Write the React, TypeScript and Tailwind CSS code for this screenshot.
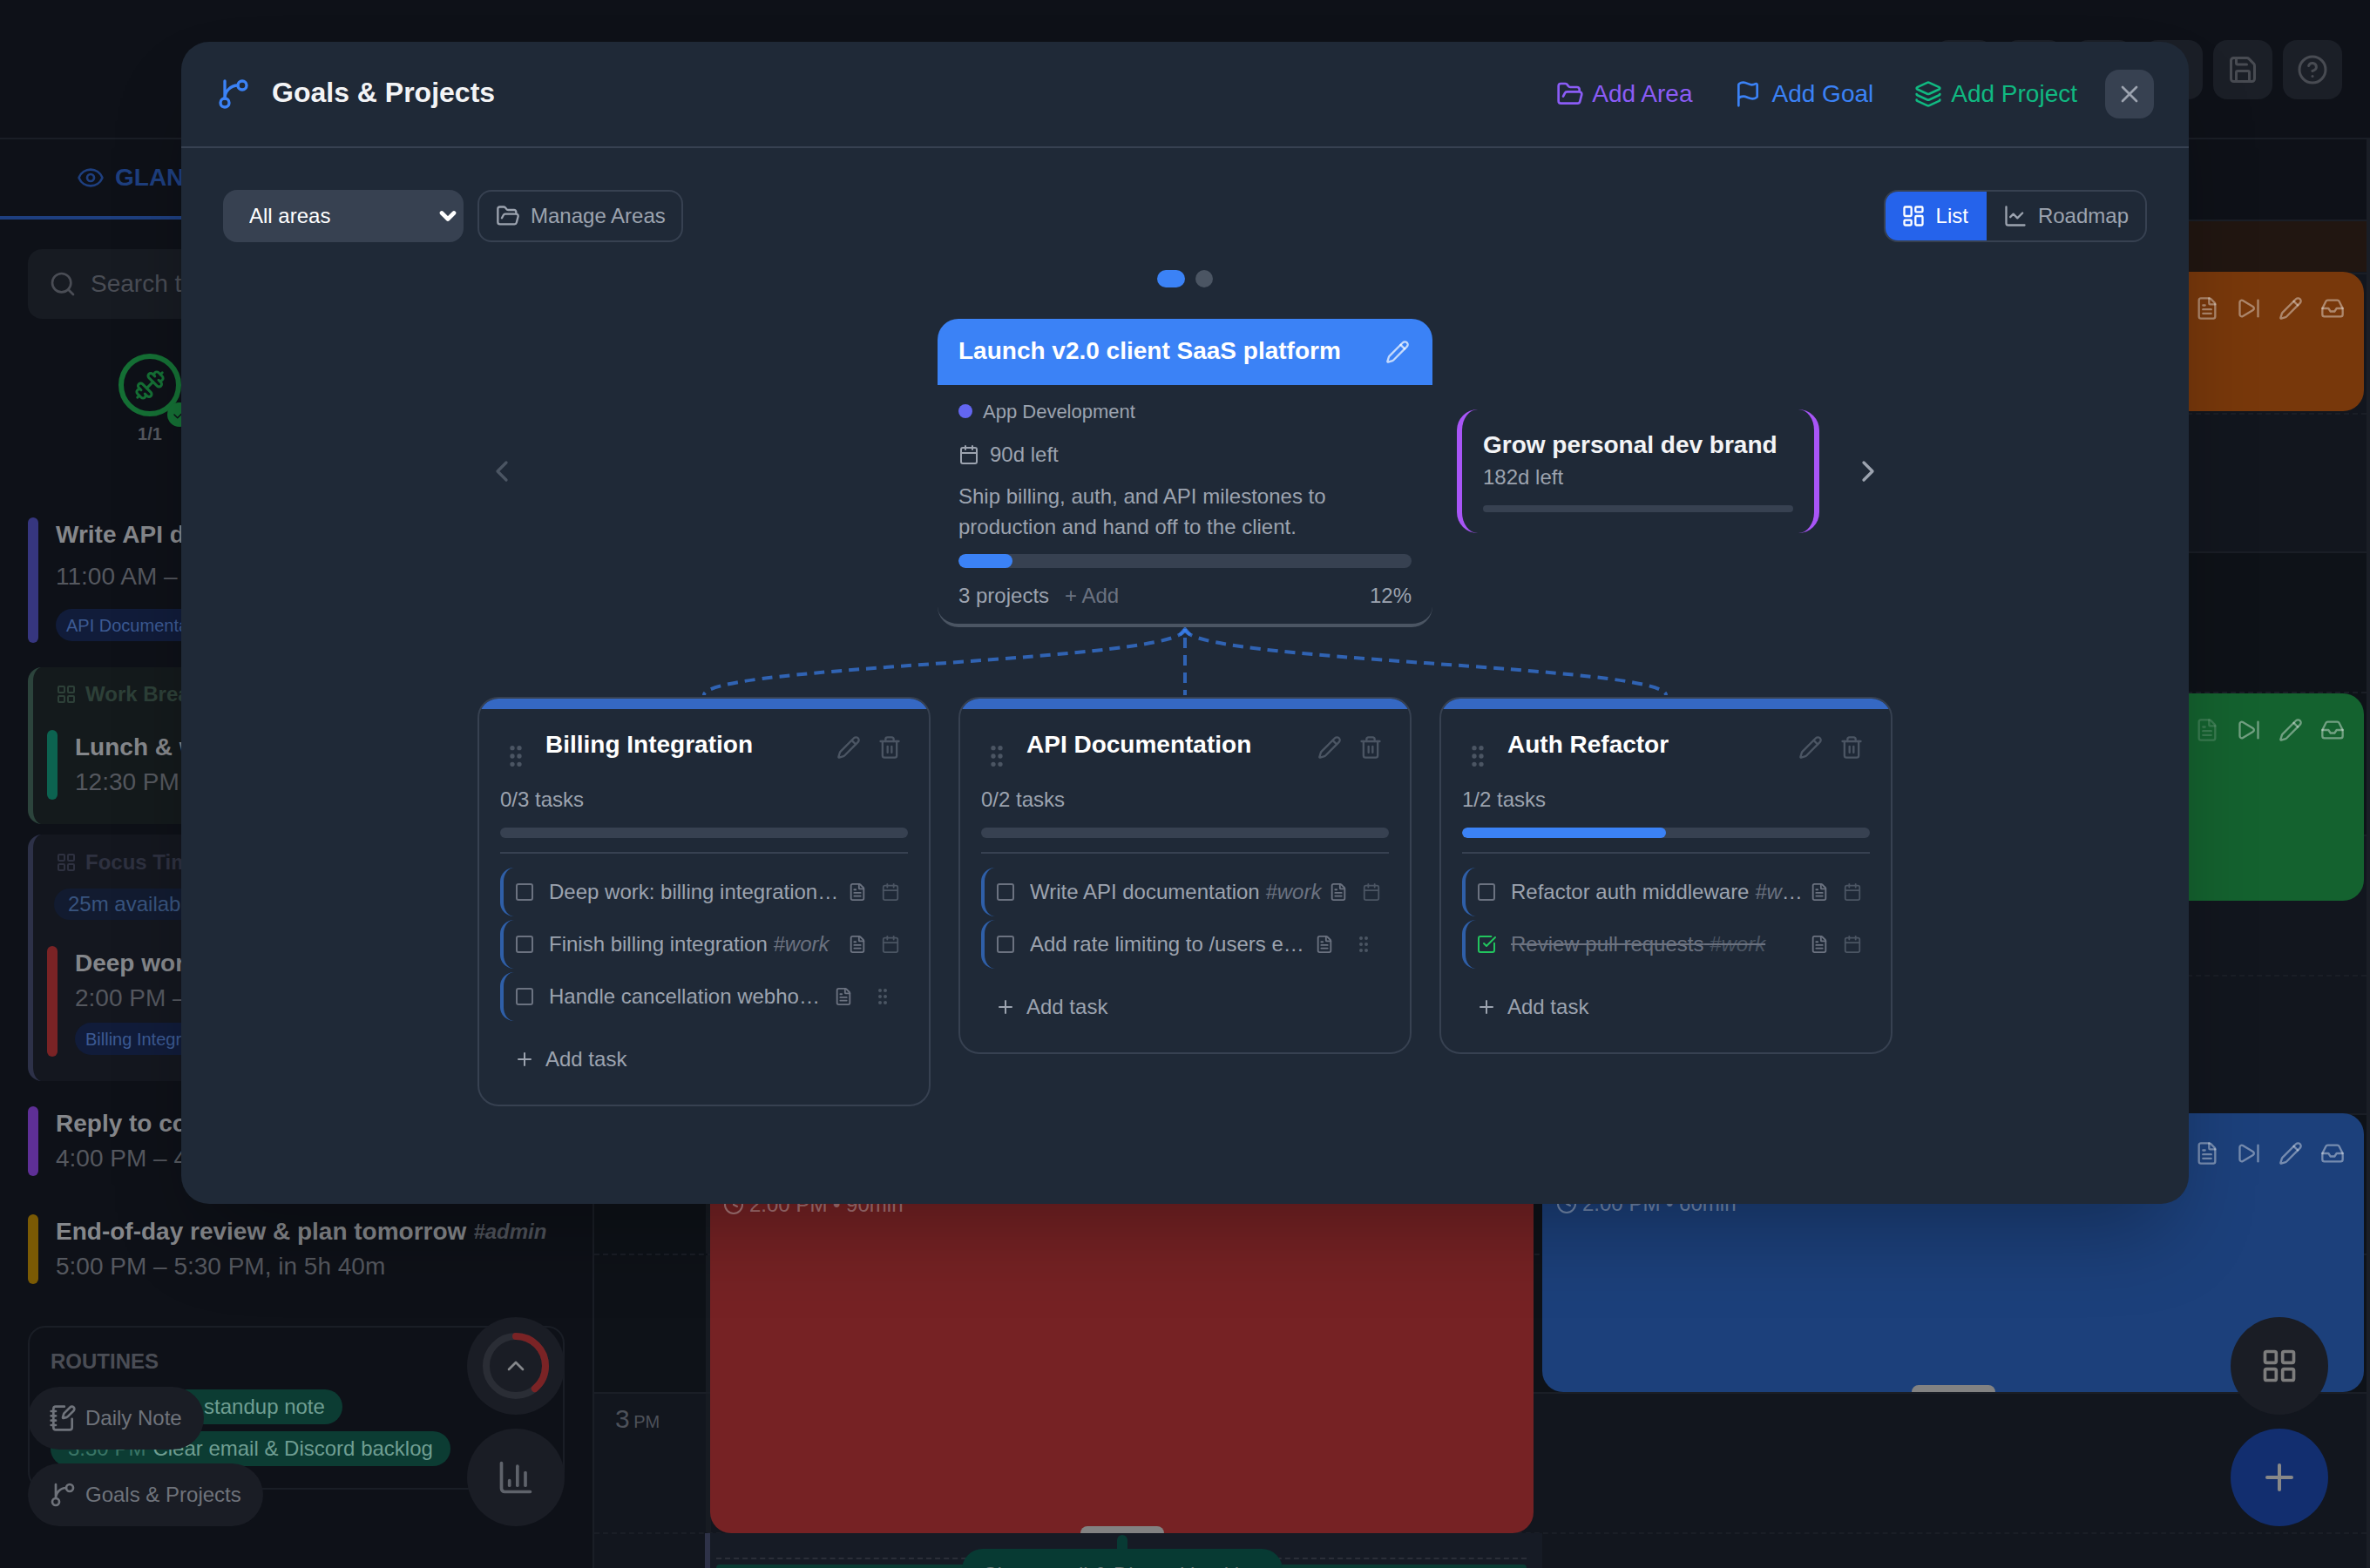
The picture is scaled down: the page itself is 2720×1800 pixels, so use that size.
import {
  Calendar,
  ChartColumn,
  ChartLine,
  Check,
  ChevronDown,
  ChevronLeft,
  ChevronRight,
  ChevronUp,
  CircleHelp,
  Clock,
  Dumbbell,
  Eye,
  FileText,
  Flag,
  FolderOpen,
  GripVertical,
  Inbox,
  Layers,
  LayoutDashboard,
  LayoutGrid,
  NotebookPen,
  Pencil,
  Plus,
  Save,
  Search,
  SkipForward,
  Square,
  SquareCheckBig,
  Trash2,
  X,
} from 'lucide-react';

type Task = { title: string; tag?: string; done?: boolean; grip?: boolean };

const projects: { name: string; count: string; pct: number; tasks: Task[] }[] = [
  {
    name: 'Billing Integration',
    count: '0/3 tasks',
    pct: 0,
    tasks: [
      { title: 'Deep work: billing integration', tag: '#work' },
      { title: 'Finish billing integration', tag: '#work' },
      { title: 'Handle cancellation webhook', tag: '#work', grip: true },
    ],
  },
  {
    name: 'API Documentation',
    count: '0/2 tasks',
    pct: 0,
    tasks: [
      { title: 'Write API documentation', tag: '#work' },
      { title: 'Add rate limiting to /users endpoint', tag: '#work', grip: true },
    ],
  },
  {
    name: 'Auth Refactor',
    count: '1/2 tasks',
    pct: 50,
    tasks: [
      { title: 'Refactor auth middleware', tag: '#work' },
      { title: 'Review pull requests', tag: '#work', done: true },
    ],
  },
];

// the branch glyph of the reference: the curve runs into the stem, not into the lower circle
function BranchIcon({ size, className }: { size: number; className?: string }) {
  return (
    <svg width={size} height={size} viewBox="0 0 24 24" fill="none" stroke="currentColor" strokeWidth="2" strokeLinecap="round" strokeLinejoin="round" className={className}>
      <path d="M15 6a9 9 0 0 0-9 9V3" />
      <circle cx="18" cy="6" r="3" />
      <circle cx="6" cy="18" r="3" />
    </svg>
  );
}

function TaskRow({ task }: { task: Task }) {
  return (
    <div className={`flex items-center h-[56px] border-l-4 border-[#2f5fa8] rounded-2xl pl-3 ${task.grip ? 'pr-[17px]' : 'pr-[9px]'}`}>
      {task.done ? (
        <SquareCheckBig size={24} className="shrink-0 text-[#22c55e]" />
      ) : (
        <Square size={24} className="shrink-0 text-[#6b7280]" />
      )}
      <span className={`ml-4 flex-1 min-w-0 truncate text-[24px] ${task.done ? 'line-through text-[#6b7280]' : 'text-[#9ca3af]'}`}>
        {task.title} <em className={task.done ? 'text-[#4b5563]' : 'text-[#6b7280]'}>{task.tag}</em>
      </span>
      <FileText size={22} className="ml-[7px] shrink-0 text-[#6b7280]" />
      {task.grip ? (
        <GripVertical size={24} className="ml-[22px] shrink-0 text-[#4b5563]" />
      ) : (
        <Calendar size={22} className="ml-4 shrink-0 text-[#4b5563]" />
      )}
    </div>
  );
}

function ProjectCard({ project }: { project: (typeof projects)[number] }) {
  return (
    <div className="w-[520px] rounded-3xl border-2 border-[#374151] overflow-hidden">
      <div className="h-3 bg-[#3568c3]" />
      <div className="px-6 pt-6 pb-[26px]">
        <div className="flex items-start">
          <GripVertical size={32} className="mt-[14px] ml-[2px] shrink-0 text-[#4b5563]" />
          <h3 className="ml-[18px] text-[28px] leading-[34px] font-bold text-white">{project.name}</h3>
          <div className="ml-auto mr-[7px] mt-[6px] flex gap-[19px] text-[#4b5563]">
            <Pencil size={28} />
            <Trash2 size={28} />
          </div>
        </div>
        <p className="mt-[18px] text-[24px] leading-8 text-[#9ca3af]">{project.count}</p>
        <div className="mt-4 h-3 rounded-full bg-[#374151] overflow-hidden">
          <div className="h-full rounded-full bg-[#3b82f6]" style={{ width: `${project.pct}%` }} />
        </div>
        <div className="mt-4 mb-4 h-[2px] bg-[#374151]" />
        <div className="flex flex-col gap-1">
          {project.tasks.map((t) => (
            <TaskRow key={t.title} task={t} />
          ))}
        </div>
        <div className="mt-[18px] h-[52px] pl-4 flex items-center gap-3 text-[24px] text-[#9ca3af]">
          <Plus size={24} />
          Add task
        </div>
      </div>
    </div>
  );
}

function GoalsModal() {
  return (
    <div className="absolute left-[208px] top-[48px] w-[2304px] h-[1334px] rounded-[32px] bg-[#1f2937] shadow-[0_50px_100px_-24px_rgba(0,0,0,0.3)]">
      <div className="h-[122px] border-b-2 border-[#374151] px-10 flex items-center">
        <BranchIcon size={40} className="text-[#3b82f6]" />
        <h2 className="ml-6 -mt-[4px] text-[32px] font-bold text-[#f3f4f6]">Goals &amp; Projects</h2>
        <div className="ml-auto flex items-center text-[28px]">
          <button className="flex items-center gap-[9px] text-[#8b5cf6]">
            <FolderOpen size={32} />
            Add Area
          </button>
          <button className="ml-[47px] flex items-center gap-3 text-[#3b82f6]">
            <Flag size={32} />
            Add Goal
          </button>
          <button className="ml-[47px] flex items-center gap-[10px] text-[#10b981]">
            <Layers size={32} />
            Add Project
          </button>
          <button className="ml-8 w-14 h-14 rounded-2xl bg-[#374151] flex items-center justify-center text-[#9ca3af]">
            <X size={32} />
          </button>
        </div>
      </div>

      <div className="px-12 pt-12">
        <div className="flex items-center">
          <div className="relative">
            <select className="block w-[276px] h-[60px] pl-[30px] rounded-2xl bg-[#374151] text-white text-[24px] appearance-none">
              <option>All areas</option>
            </select>
            <ChevronDown size={28} strokeWidth={4} className="absolute right-[4px] top-4 text-white pointer-events-none" />
          </div>
          <button className="ml-4 h-[60px] pl-[19px] pr-[18px] rounded-2xl border-2 border-[#374151] flex items-center gap-3 text-[24px] text-[#9ca3af]">
            <FolderOpen size={28} />
            Manage Areas
          </button>
          <div className="ml-auto h-[60px] rounded-2xl border-2 border-[#374151] overflow-hidden flex text-[24px]">
            <div className="pl-[18px] pr-[21px] bg-[#2563eb] text-white flex items-center gap-3">
              <LayoutDashboard size={28} />
              List
            </div>
            <div className="pl-[19px] pr-[19px] text-[#9ca3af] flex items-center gap-3">
              <ChartLine size={28} />
              Roadmap
            </div>
          </div>
        </div>

        <div className="mt-8 flex justify-center gap-3">
          <span className="w-8 h-5 rounded-full bg-[#3b82f6]" />
          <span className="w-5 h-5 rounded-full bg-[#4b5563]" />
        </div>

        <div className="mt-9 grid grid-cols-[1fr_568px_1fr] items-center">
          <div className="flex justify-end pr-[480px] pb-1">
            <ChevronLeft size={40} className="text-[#4b5563]" />
          </div>
          <div className="rounded-3xl border-b-4 border-[#4b5563]">
            <div className="h-[76px] rounded-t-3xl bg-[#3b82f6] pl-6 pr-[26px] flex items-center justify-between">
              <h3 className="-mt-[2px] text-[28px] font-bold text-white">Launch v2.0 client SaaS platform</h3>
              <Pencil size={28} className="text-white/70" />
            </div>
            <div className="px-6 pt-[14px] pb-4">
              <div className="h-8 flex items-center gap-3 text-[22px] text-[#9ca3af]">
                <span className="w-4 h-4 rounded-full bg-[#6366f1]" />
                App Development
              </div>
              <div className="mt-[18px] h-8 flex items-center gap-3 text-[24px] text-[#9ca3af]">
                <Calendar size={24} />
                90d left
              </div>
              <p className="mt-[14px] text-[24px] leading-[35px] text-[#9ca3af]">
                Ship billing, auth, and API milestones to production and hand off to the client.
              </p>
              <div className="mt-[14px] h-4 rounded-full bg-[#374151] overflow-hidden">
                <div className="h-full w-[12%] rounded-full bg-[#3b82f6]" />
              </div>
              <div className="mt-4 h-8 flex items-center text-[24px] text-[#9ca3af]">
                3 projects
                <span className="ml-[18px] text-[#6b7280]">+ Add</span>
                <span className="ml-auto">12%</span>
              </div>
            </div>
          </div>
          <div className="flex items-center pb-1 pl-7">
            <div className="w-[416px] rounded-3xl border-x-[6px] border-[#a855f7] px-6 pt-6 pb-6">
              <h3 className="text-[28px] leading-[34px] font-bold text-[#f3f4f6]">Grow personal dev brand</h3>
              <p className="mt-1 text-[24px] leading-8 text-[#9ca3af]">182d left</p>
              <div className="mt-4 h-2 rounded-full bg-[#374151]" />
            </div>
            <ChevronRight size={40} className="ml-9 text-[#9ca3af]" />
          </div>
        </div>

        {/* connectors from the goal down to its projects */}
        <svg viewBox="0 0 2208 80" className="block w-[2208px] h-[80px]" fill="none" stroke="#3b82f6" strokeOpacity="0.65" strokeWidth="4">
          <path d="M1104 2C1104 40 1656 43 1656 78" strokeDasharray="12 8" />
          <path d="M1104 2C1104 40 552 43 552 78" strokeDasharray="12 8" />
          <path d="M1104 12V78" strokeDasharray="12 8" />
          <path d="M1098 9L1104 2L1110 9" />
        </svg>

        <div className="flex justify-center items-start gap-8">
          {projects.map((p) => (
            <ProjectCard key={p.name} project={p} />
          ))}
        </div>
      </div>
    </div>
  );
}

function SideEvent({ bar, title, time, timeGap, pill, tag }: { bar: string; title: string; time: string; timeGap?: boolean; pill?: string; tag?: string }) {
  return (
    <div className="flex gap-5">
      <div className={`w-3 rounded-full shrink-0 ${bar}`} />
      <div className="min-w-0">
        <div className="h-10 flex items-center whitespace-nowrap text-[28px] font-bold text-[#85878b]">
          {title}
          {tag && <em className="ml-[8px] text-[24px] text-[#4f535b]">{tag}</em>}
        </div>
        <div className={`h-10 flex items-center whitespace-nowrap text-[28px] text-[#55585f] ${timeGap ? 'mt-2' : ''}`}>{time}</div>
        {pill && (
          <div className={`${timeGap ? 'mt-[17px]' : 'mt-2'} mb-[2px] w-fit h-[37px] px-3 rounded-full bg-[#111c3a] flex items-center text-[20px] text-[#3c5a93] whitespace-nowrap`}>
            {pill}
          </div>
        )}
      </div>
    </div>
  );
}

function Sidebar() {
  return (
    <aside className="w-[680px] shrink-0 flex flex-col">
      <div className="h-[92px] w-[400px] pl-[88px] border-b-4 border-[#1e3f7f] flex items-center gap-3 text-[28px] font-bold text-[#1e3f7f]">
        <Eye size={32} />
        GLANCE
      </div>
      <div className="px-8">
        <div className="mt-[34px] h-20 rounded-2xl bg-[#171b22] pl-6 flex items-center gap-4 text-[28px] text-[#4a4d55]">
          <Search size={32} />
          Search tasks
        </div>

        <div className="mt-10 ml-[104px] w-[72px] flex flex-col items-center">
          <div className="relative w-[72px] h-[72px] rounded-full border-[6px] border-[#157035] flex items-center justify-center text-[#157035]">
            <Dumbbell size={36} />
            <span className="absolute -right-[18px] -bottom-[18px] w-7 h-7 rounded-full bg-[#157035] flex items-center justify-center text-[#0e1118]">
              <Check size={18} />
            </span>
          </div>
          <span className="mt-2 text-[20px] leading-6 font-bold text-[#55585f]">1/1</span>
        </div>

        <div className="mt-[84px]">
          <SideEvent bar="bg-[#36367f]" title="Write API documentation" time="11:00 AM – 12:00 PM" timeGap pill="API Documentation" />
        </div>

        <div className="mt-7 h-[180px] rounded-2xl border-l-[6px] border-[#2c443c] bg-[#141a1c] pl-4 pt-4">
          <div className="h-[30px] pl-[10px] flex items-center gap-[10px] text-[24px] font-bold text-[#2d4038]">
            <LayoutGrid size={24} />
            Work Break
          </div>
          <div className="mt-[26px]">
            <SideEvent bar="bg-[#0c6350]" title="Lunch & walk" time="12:30 PM – 1:30 PM" />
          </div>
        </div>

        <div className="mt-3 h-[283px] rounded-2xl border-l-[6px] border-[#2d3148] bg-[#14171f] pl-4 pt-[17px]">
          <div className="h-[30px] pl-[10px] flex items-center gap-[10px] text-[24px] font-bold text-[#2e3140]">
            <LayoutGrid size={24} />
            Focus Time
          </div>
          <div className="mt-[15px] ml-2 w-fit h-9 px-4 rounded-full bg-[#121b30] flex items-center text-[24px] text-[#38547f]">25m available</div>
          <div className="mt-[30px]">
            <SideEvent bar="bg-[#7a2325]" title="Deep work: billing" time="2:00 PM – 3:30 PM" pill="Billing Integration" />
          </div>
        </div>

        <div className="mt-[29px]">
          <SideEvent bar="bg-[#5e2f96]" title="Reply to comments" time="4:00 PM – 4:30 PM" />
        </div>
        <div className="mt-[44px]">
          <SideEvent bar="bg-[#7a5a04]" title="End-of-day review & plan tomorrow" tag="#admin" time="5:00 PM – 5:30 PM, in 5h 40m" />
        </div>

        <div className="mt-12 h-[188px] rounded-[20px] border-2 border-[#1a1e26] pl-6 pt-[25px]">
          <h4 className="h-7 flex items-center text-[24px] font-bold text-[#4a4d55]">ROUTINES</h4>
          <div className="mt-[18px] w-fit h-10 px-5 rounded-full bg-[#0c3c33] flex items-center gap-2 text-[24px] text-[#6f9e92]">
            <span className="text-[#3a7566]">9:30 AM</span> Daily standup note
          </div>
          <div className="mt-2 w-fit h-10 px-5 rounded-full bg-[#0c3c33] flex items-center gap-2 text-[24px] text-[#6f9e92]">
            <span className="text-[#3a7566]">3:30 PM</span> Clear email &amp; Discord backlog
          </div>
        </div>
      </div>
    </aside>
  );
}

function EventIcons({ dimFile }: { dimFile?: boolean }) {
  return (
    <div className="flex justify-end gap-5 pr-[22px] text-white/40">
      <FileText size={28} className={dimFile ? 'opacity-40' : ''} />
      <SkipForward size={28} />
      <Pencil size={28} />
      <Inbox size={28} />
    </div>
  );
}

function HourRow({ hour, period, light, tall }: { hour: string; period: string; light?: boolean; tall?: boolean }) {
  return (
    <div className={`${tall ? 'h-[325px]' : 'h-[320px]'} border-t-2 border-[#1a1e26] ${light ? 'bg-[#12161e]' : 'bg-[#0e1218]'}`}>
      <div className="h-[159px] flex">
        <div className="w-[128px] pl-6 pt-[6px] text-[#4d515a]">
          <span className="text-[30px]">{hour}</span> <span className="text-[20px]">{period}</span>
        </div>
        <div className="w-[6px] bg-[#171b22]" />
      </div>
      <div className={`${tall ? 'h-[164px]' : 'h-[159px]'} flex border-t-2 border-dashed border-[#1a1e26]`}>
        <div className="w-[128px]" />
        <div className="w-[6px] bg-[#171b22]" />
      </div>
    </div>
  );
}

function Timeline() {
  return (
    <section className="relative flex-1 border-l-2 border-r-4 border-[#1a1e26] overflow-hidden">
      <div className="h-[94px] border-b-2 border-[#1a1e26]" />
      <div className="h-[58px] bg-[#211611]" />
      <div className="h-px bg-[#12161e]" />
      <HourRow hour="11" period="AM" light />
      <HourRow hour="12" period="PM" tall />
      <HourRow hour="1" period="PM" light />
      <HourRow hour="2" period="PM" />
      <HourRow hour="3" period="PM" light />

      {/* scheduled blocks sit on the hour grid */}
      <div className="absolute left-[1088px] top-[152px] w-[943px] h-[160px] rounded-3xl bg-[#78380b] pt-7">
        <EventIcons />
      </div>
      <div className="absolute left-[1088px] top-[636px] w-[943px] h-[238px] rounded-3xl bg-[#14622f] pt-7">
        <EventIcons dimFile />
      </div>
      <div className="absolute left-[1088px] top-[1118px] w-[943px] h-[320px] rounded-3xl bg-[#1c407b] pt-8 pl-4">
        <EventIcons />
        <div className="mt-[26px] flex items-center gap-[6px] text-[24px] text-white/40">
          <Clock size={24} />
          2:00 PM • 60min
        </div>
        <span className="absolute bottom-0 left-1/2 -translate-x-1/2 w-24 h-2 rounded-t-lg bg-[#828282]" />
      </div>
      <div className="absolute left-[133px] top-[1118px] w-[945px] h-[482px] rounded-3xl bg-[#762224] pt-[87px] pl-[15px]">
        <div className="flex items-center gap-[6px] text-[24px] text-white/40">
          <Clock size={24} />
          2:00 PM • 90min
        </div>
        <span className="absolute bottom-0 left-1/2 -translate-x-1/2 w-24 h-2 rounded-t-lg bg-[#828282]" />
      </div>

      <div className="absolute left-[127px] top-[1600px] w-[6px] h-[40px] bg-[#2e3248]" />
      <div className="absolute left-[133px] top-[1600px] w-[955px] h-[40px] bg-[#161b25]" />
      <div className="absolute left-[140px] top-[1628px] w-[930px] h-[12px] border-t-2 border-dashed border-[#2a2e38]" />
      <div className="absolute left-[140px] top-[1636px] w-[930px] h-[4px] rounded-t bg-[#0a3c34]" />
      <div className="absolute left-[600px] top-[1602px] w-3 h-5 rounded-t-full bg-[#083a34]" />
      <div className="absolute left-[422px] top-[1618px] w-[368px] h-[40px] rounded-t-3xl bg-[#073a33] pt-[12px] text-center text-[24px] text-[#707a78]">
        Clear email &amp; Discord backlog
      </div>
    </section>
  );
}

export default function App() {
  return (
    <div className="relative w-[2720px] h-[1800px] overflow-hidden bg-[#0e1118] font-['Liberation_Sans',Arial,sans-serif]">
      <header className="h-[160px] border-b-2 border-[#1a1e26] pt-[46px] pr-8 flex justify-end gap-3 text-[#484b52]">
        {[0, 1, 2, 3].map((i) => (
          <div key={i} className="w-[68px] h-[68px] rounded-2xl bg-[#1b1f27]" />
        ))}
        <button className="w-[68px] h-[68px] rounded-2xl bg-[#1b1f27] flex items-center justify-center">
          <Save size={36} />
        </button>
        <button className="w-[68px] h-[68px] rounded-2xl bg-[#1b1f27] flex items-center justify-center">
          <CircleHelp size={36} />
        </button>
      </header>

      <main className="flex h-[1640px]">
        <Sidebar />
        <Timeline />
      </main>

      {/* floating actions */}
      <button className="absolute left-[32px] top-[1592px] h-[72px] pl-6 pr-[25px] rounded-full bg-[#1a1d25] flex items-center gap-[10px] text-[24px] text-[#6f737b]">
        <NotebookPen size={32} />
        Daily Note
      </button>
      <button className="absolute left-[32px] top-[1680px] h-[72px] pl-6 pr-[25px] rounded-full bg-[#1a1d25] flex items-center gap-[10px] text-[24px] text-[#6f737b]">
        <BranchIcon size={32} />
        Goals &amp; Projects
      </button>
      <button className="absolute left-[536px] top-[1512px] w-28 h-28 rounded-full bg-[#1a1d25] flex items-center justify-center">
        <svg viewBox="0 0 84 84" className="absolute w-[84px] h-[84px] -rotate-90" fill="none" strokeWidth="8">
          <circle cx="42" cy="42" r="34" stroke="#2a2d35" />
          <circle cx="42" cy="42" r="34" stroke="#7a2325" strokeLinecap="round" strokeDasharray="83 214" />
        </svg>
        <ChevronUp size={32} className="text-[#85878b]" />
      </button>
      <button className="absolute left-[536px] top-[1640px] w-28 h-28 rounded-full bg-[#1a1d25] flex items-center justify-center text-[#5f636b]">
        <ChartColumn size={44} />
      </button>
      <button className="absolute left-[2560px] top-[1512px] w-28 h-28 rounded-full bg-[#1a1d25] flex items-center justify-center text-[#7d7d7d]">
        <LayoutGrid size={44} />
      </button>
      <button className="absolute left-[2560px] top-[1640px] w-28 h-28 rounded-full bg-[#122e6f] flex items-center justify-center text-[#888888]">
        <Plus size={48} />
      </button>

      <GoalsModal />
    </div>
  );
}
